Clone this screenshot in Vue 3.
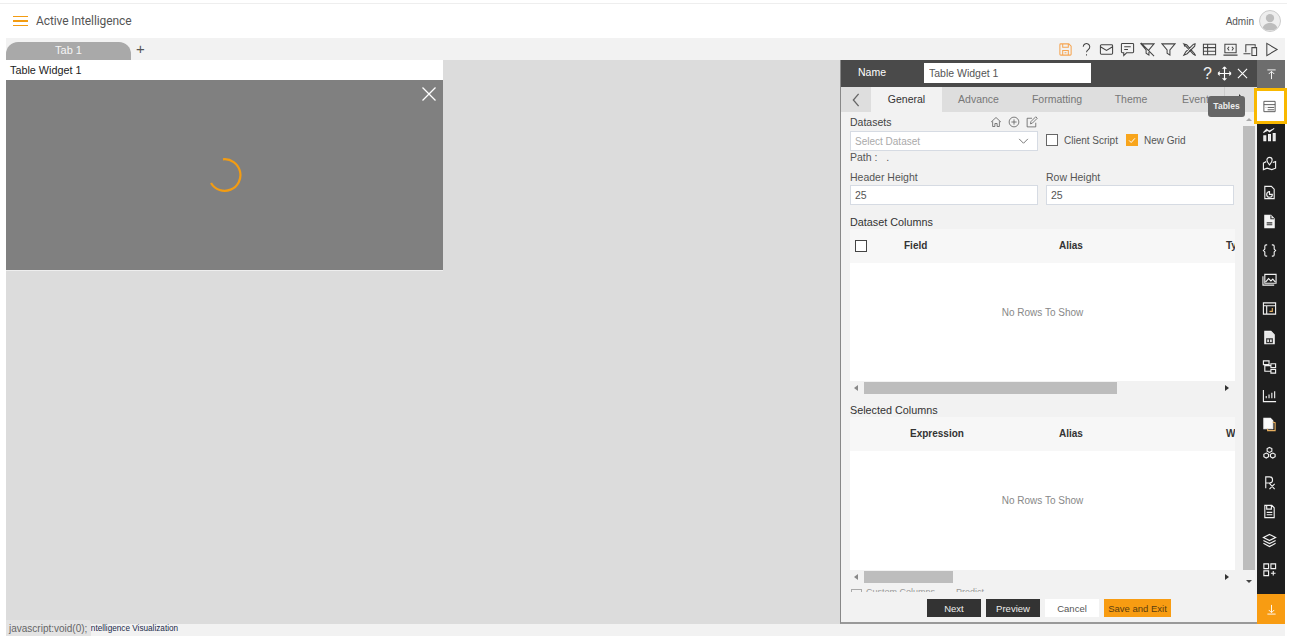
<template>
  <div class="page">
    <header class="topbar">
      <div class="brand">
        <span class="burger"><i></i><i></i><i></i></span>
        <span class="brand-name">Active Intelligence</span>
      </div>
      <div class="user">
        <span>Admin</span>
        <span class="avatar">
          <svg viewBox="0 0 24 24" width="20" height="20"><circle cx="12" cy="8.500" r="5" fill="#bdbdbd"/><path d="M3 23c0-6 4-8.500 9-8.500s9 2.500 9 8.500z" fill="#bdbdbd"/></svg>
        </span>
      </div>
    </header>

    <div class="tabstrip">
      <div class="tab">Tab 1</div>
      <span class="tab-add">+</span>
      <div class="tools">
        <svg v-for="t in toolIcons" :key="t.name" class="tool" :class="{ save: t.name === 'save' }" viewBox="0 0 16 16" width="15" height="15" fill="none" stroke="currentColor" stroke-width="1.100">
          <path :d="t.d" />
        </svg>
      </div>
    </div>

    <main class="workspace">
      <section class="canvas">
        <div class="widget">
          <div class="widget-title">Table Widget 1</div>
          <div class="widget-body">
            <svg class="widget-close" viewBox="0 0 14 14" width="14" height="14" stroke="#fff" stroke-width="1.300"><path d="M0.500 0.500L13.500 13.500M13.500 0.500L0.500 13.500" /></svg>
            <svg class="spinner" viewBox="0 0 36 36" width="36" height="36" fill="none" stroke="#f39c12" stroke-width="2.200"><path d="M16 2.300A15.800 15.800 0 1 1 4 26" /></svg>
          </div>
        </div>
      </section>

      <aside class="panel">
        <div class="panel-head">
          <span class="name-label">Name</span>
          <input class="name-input" value="Table Widget 1" />
          <div class="head-icons">
            <span class="q">?</span>
            <svg viewBox="0 0 16 16" width="15" height="15" fill="none" stroke="#fff" stroke-width="1.200"><path d="M8 1v14M1 8h14M8 1L6 3M8 1l2 2M8 15l-2-2M8 15l2-2M1 8l2-2M1 8l2 2M15 8l-2-2M15 8l-2 2"/></svg>
            <svg viewBox="0 0 12 12" width="11" height="11" fill="none" stroke="#fff" stroke-width="1.200"><path d="M1 1l10 10M11 1L1 11"/></svg>
          </div>
        </div>

        <div class="panel-tabs">
          <svg class="tabs-arrow" viewBox="0 0 10 16" width="9" height="14" fill="none" stroke="#666" stroke-width="1.500"><path d="M8 1L2 8l6 7"/></svg>
          <div class="ptab active">General</div>
          <div class="ptab t-advance">Advance</div>
          <div class="ptab t-format">Formatting</div>
          <div class="ptab t-theme">Theme</div>
          <div class="ptab last">Events</div>
          <div class="tabs-next"></div>
        </div>

        <div class="panel-scroll">
          <div class="form">
            <div class="ds-row">
              <div class="ds-col">
                <div class="ds-label">
                  <span>Datasets</span>
                  <span class="ds-icons">
                    <svg viewBox="0 0 16 16" width="12" height="12" fill="none" stroke="#555" stroke-width="1"><path d="M1.500 8L8 2l6.500 6M3.500 7v7h3v-4h3v4h3V7"/></svg>
                    <svg viewBox="0 0 16 16" width="12" height="12" fill="none" stroke="#555" stroke-width="1"><circle cx="8" cy="8" r="6.500"/><path d="M8 4.500v7M4.500 8h7"/></svg>
                    <svg viewBox="0 0 16 16" width="12" height="12" fill="none" stroke="#555" stroke-width="1"><path d="M13 9v5.500H1.500V3H8M6 10.500l.5-3L13 1l2 2-6.500 6.500z"/></svg>
                  </span>
                </div>
                <div class="select">
                  <span>Select Dataset</span>
                  <svg viewBox="0 0 12 8" width="11" height="7" fill="none" stroke="#666" stroke-width="1"><path d="M1 1l5 5 5-5"/></svg>
                </div>
              </div>
              <div class="checks">
                <span class="check"></span><span class="check-text">Client Script</span>
                <span class="check on">
                  <svg viewBox="0 0 12 12" width="10" height="10" fill="none" stroke="#fff" stroke-width="1.200"><path d="M2.500 6.500l2.500 2.500 4.500-5"/></svg>
                </span><span class="check-text">New Grid</span>
              </div>
            </div>
            <div class="path">Path :&nbsp;&nbsp; .</div>

            <div class="heights">
              <label class="field">
                <span>Header Height</span>
                <input value="25" />
              </label>
              <label class="field">
                <span>Row Height</span>
                <input value="25" />
              </label>
            </div>

            <div class="section-title first">Dataset Columns</div>
            <div class="grid grid-a">
              <div class="grid-head">
                <span class="head-check"></span>
                <b class="c-field">Field</b>
                <b class="c-alias">Alias</b>
                <b class="c-last">Ty</b>
              </div>
              <div class="grid-body">No Rows To Show</div>
              <div class="hbar">
                <span class="arr left"></span>
                <span class="track"><span class="thumb" style="width: 253px"></span></span>
                <span class="arr right"></span>
              </div>
            </div>

            <div class="section-title second">Selected Columns</div>
            <div class="grid grid-b">
              <div class="grid-head">
                <b class="c-expr">Expression</b>
                <b class="c-alias">Alias</b>
                <b class="c-last">W</b>
              </div>
              <div class="grid-body">No Rows To Show</div>
              <div class="hbar">
                <span class="arr left"></span>
                <span class="track"><span class="thumb" style="width: 89px"></span></span>
                <span class="arr right"></span>
              </div>
            </div>
            <div class="cut-row"><span class="cut-box"></span><span>Custom Columns</span><span class="cut-arrow">→</span><span>Predict</span></div>
          </div>

          <div class="vbar">
            <span class="varr up"></span>
            <span class="vtrack"></span>
            <span class="varr down"></span>
          </div>
        </div>

        <div class="panel-foot">
          <button class="btn dark">Next</button>
          <button class="btn dark">Preview</button>
          <button class="btn plain">Cancel</button>
          <button class="btn orange">Save and Exit</button>
        </div>

        <div class="tooltip">Tables</div>
      </aside>

      <nav class="rail">
        <div class="rail-top">
          <svg viewBox="0 0 12 12" width="11" height="11" fill="none" stroke="#fff" stroke-width="1"><path d="M1.500 1h9M6 11V3M3 5.500L6 2.500l3 3"/></svg>
        </div>
        <div class="rail-items">
          <div class="rail-item active">
            <svg viewBox="0 0 16 16" width="15" height="15" fill="none" stroke="#555" stroke-width="1"><path d="M2 2.500h12v11H2zM2 6h12M6 9h7M6 11.500h7M4 9h.5"/></svg>
          </div>
          <div v-for="r in railIcons" :key="r.name" class="rail-item">
            <svg viewBox="0 0 16 16" width="15" height="15" :fill="r.fill || 'none'" stroke="#f2f2f2" stroke-width="1.200">
              <path :d="r.d" />
              <path v-if="r.detail" :d="r.detail" fill="none" :stroke="r.detailColor || '#333'" />
            </svg>
          </div>
        </div>
        <div class="rail-bottom">
          <svg viewBox="0 0 12 12" width="11" height="11" fill="none" stroke="#fff" stroke-width="1"><path d="M1.500 11h9M6 1v8M3 6.500l3 3 3-3"/></svg>
        </div>
      </nav>
    </main>

    <footer class="status">Active Intelligence Visualization</footer>
    <div class="link-hint">javascript:void(0);</div>
  </div>
</template>

<script setup>
const toolIcons = [
  { name: 'save', d: 'M3 2h8.500L14 4.500V13a1 1 0 0 1-1 1H3a1 1 0 0 1-1-1V3a1 1 0 0 1 1-1zM5 2v3.500h6V2M5 14V9h6v5M7 11.500h2' },
  { name: 'help', d: 'M4.500 5a3.500 3.500 0 1 1 5.500 3c-1.300 1-2 1.500-2 3M8 13v1.500' },
  { name: 'mail', d: 'M2.500 3h11a1 1 0 0 1 1 1v8a1 1 0 0 1-1 1h-11a1 1 0 0 1-1-1V4a1 1 0 0 1 1-1zM1.500 5L8 9l6.500-4' },
  { name: 'comment', d: 'M2.500 1.500h11a1 1 0 0 1 1 1v8a1 1 0 0 1-1 1H7L4 14.500v-3H2.500a1 1 0 0 1-1-1v-8a1 1 0 0 1 1-1zM4.500 5h7M4.500 8h4' },
  { name: 'nofilter', d: 'M1 2h14L9.500 8.500V14L6.500 12V8.500zM1 1l14 14' },
  { name: 'filter', d: 'M1 2h14L9.500 8.500V14L6.500 12V8.500z' },
  { name: 'tools', d: 'M2 2l3 1 8 9 1.500 2.500L12 13 4 4.500zM14 2l-2 .5-8 8-2 3.500 3.500-1.500 8-8zM2 2l1 3' },
  { name: 'table', d: 'M1.500 2.500h13v11h-13zM1.500 6h13M1.500 9.800h13M6 2.500v11' },
  { name: 'code', d: 'M2 2.500h12v9H2zM0.500 14h15M6.500 5L5 7l1.500 2M9.500 5L11 7 9.500 9' },
  { name: 'devices', d: 'M3 11V3h10v2M0.500 12.500H8M9.500 6h5v8.500h-5z' },
  { name: 'play', d: 'M3 1.500l11 6.500-11 6.500z' }
]

const railIcons = [
  { name: 'charts', d: 'M2 14.500V9.500h2v5zM7 14.500V8h2v6.500zM12 14.500V7h2v7.500zM1.500 6l3.500-3.500L8 5l5-3.500', fill: '#ddd' },
  { name: 'map', d: 'M8 1.500a2.800 2.800 0 0 1 2.800 2.800C10.800 6.500 8 9.500 8 9.500S5.200 6.500 5.200 4.300A2.800 2.800 0 0 1 8 1.500zM4.500 6L1.500 7.500v7l4-1.500 5 1.500 4-1.500V6L11.500 7' },
  { name: 'report', d: 'M3 1.500h7L13 4.500v10H3zM8 7a3 3 0 1 0 3 3H8z' },
  { name: 'doc', d: 'M3 1.500h6.500L13 5v9.500H3z', fill: '#f5f5f5', detail: 'M5 9.500h6M5 11.500h6M9.500 1.500V5H13' },
  { name: 'braces', d: 'M5.500 2H4.500C3.500 2 3 2.500 3 3.500V6.500L1.500 8 3 9.500v3C3 13.500 3.500 14 4.500 14h1M10.500 2h1C12.500 2 13 2.500 13 3.500V6.500L14.500 8 13 9.500v3c0 1-.5 1.500-1.500 1.500h-1' },
  { name: 'image', d: 'M3 2.500h12v9.500H3zM1 4.500V14h12M4 10.500l3-3.500 2.500 2.500L11.500 7.500 14 10.500' },
  { name: 'pivot', d: 'M1.500 2h13v12h-13zM1.500 5h13M5 5v9', detail: 'M11 7.500v3.500H8', detailColor: '#e8b060' },
  { name: 'file', d: 'M3 1.500h6.500L13 5v9.500H3z', fill: '#e8e8e8', detail: 'M5 9.500h6v4H5zM8 9.500v4' },
  { name: 'tree', d: 'M1.500 2h6v4h-6zM9.500 5h5v4h-5zM9.500 11h5v4h-5zM3 6v7h6.500M3 7h6.500' },
  { name: 'linechart', d: 'M1.500 2v12.500H15M4.500 11V8.500M7.500 11V7M10.500 11V5M13.500 11V3.500' },
  { name: 'copy', d: 'M2 1.500h7L11.500 4v8.500H2z', fill: '#fafafa', detail: 'M11.500 5.500l2.500.5v8.500H6v-2', detailColor: '#e8b060' },
  { name: 'cubes', d: 'M8 1.500l2.500 1.300v2.700L8 6.800 5.500 5.500V2.800zM4.500 7.500L7 8.800v2.700L4.500 12.800 2 11.500V8.800zM11.500 7.500L14 8.800v2.700l-2.500 1.300L9 11.500V8.800z' },
  { name: 'rx', d: 'M4 14V2h4a3 3 0 0 1 0 6.500H4M7.500 8.500L13.500 15M13.500 9.500L8 15' },
  { name: 'save', d: 'M3 1.500h7.500L13 4v10.500H3zM5 1.500v4h5v-4M5 9h6M5 11.500h6' },
  { name: 'layers', d: 'M8 1.500l6.500 3.200L8 8 1.500 4.700zM1.500 8L8 11.300 14.500 8M1.500 11L8 14.500 14.500 11' },
  { name: 'widgets', d: 'M2 2h5v5H2zM9.500 2h5v5h-5zM2 9.500h5v5H2zM12 9.500v5M9.500 12h5' }
]
</script>

<style>
html, body {
  margin: 0;
  background: #fff;
}
</style>

<style scoped>
.page {
  position: relative;
  width: 1295px;
  height: 636px;
  overflow: hidden;
  background: #fff;
  font-family: "Liberation Sans", Arial, sans-serif;
  font-size: 10.500px;
  color: #333;
  padding: 3px 10px 0 6px;
  box-sizing: border-box;
  display: flex;
  flex-direction: column;
}

.topbar {
  height: 35px;
  flex: none;
  margin-left: -6px;
  margin-right: -2px;
  border-top: 1px solid #eee;
  box-sizing: border-box;
  display: flex;
  justify-content: space-between;
  align-items: center;
  padding: 0 6px 0 13px;
}

.brand {
  display: flex;
  align-items: center;
  gap: 8px;
}

.burger {
  display: flex;
  flex-direction: column;
  gap: 3px;
  width: 15px;
}

.burger i {
  height: 1.500px;
  background: #f39c12;
}

.brand-name {
  font-family: Roboto, "Liberation Sans", sans-serif;
  font-size: 12px;
  color: #555;
  letter-spacing: -0.100px;
}

.user {
  display: flex;
  align-items: center;
  gap: 5px;
  font-size: 10px;
  color: #555;
}

.avatar {
  width: 20px;
  height: 20px;
  border-radius: 50%;
  border: 1px solid #ccc;
  overflow: hidden;
  background: #eee;
  display: block;
}

.tabstrip {
  height: 22px;
  flex: none;
  background: #f2f2f2;
  display: flex;
  align-items: flex-end;
  position: relative;
}

.tab {
  width: 125px;
  height: 18px;
  background: #a9a9a9;
  color: #f5f5f5;
  border-radius: 12px 12px 0 0;
  text-align: center;
  line-height: 17px;
  font-size: 11px;
}

.tab-add {
  margin-left: 5px;
  height: 21px;
  font-size: 15px;
  line-height: 20px;
  color: #555;
}

.tools {
  margin-left: auto;
  height: 22px;
  display: flex;
  align-items: center;
  gap: 5.600px;
  padding-right: 6px;
  color: #444;
}

.tool.save {
  color: #f6a552;
}

.workspace {
  flex: 1;
  display: flex;
  min-height: 0;
}

.canvas {
  flex: 1;
  background: #dcdcdc;
}

.widget {
  width: 437px;
}

.widget-title {
  height: 20px;
  background: #fff;
  line-height: 20px;
  padding-left: 4px;
  font-size: 10.800px;
  color: #222;
}

.widget-body {
  position: relative;
  height: 190px;
  background: #808080;
  border-bottom: 1px solid #eee;
}

.widget-close {
  position: absolute;
  top: 7px;
  right: 7px;
}

.spinner {
  position: absolute;
  left: 201px;
  top: 77px;
}

.panel {
  position: relative;
  width: 417px;
  flex: none;
  background: #f2f2f2;
  border-left: 1px solid #888;
  border-bottom: 2px solid #999;
  box-sizing: border-box;
  display: flex;
  flex-direction: column;
}

.panel-head {
  height: 27px;
  flex: none;
  background: #4a4a4a;
  display: flex;
  align-items: center;
  color: #fff;
}

.name-label {
  width: 83px;
  padding-left: 17px;
  box-sizing: border-box;
  font-size: 10.500px;
  margin-top: -3px;
}

.name-input {
  width: 167px;
  height: 20px;
  border: 0;
  padding: 0 5px;
  box-sizing: border-box;
  font: 10.500px "Liberation Sans", Arial, sans-serif;
  color: #555;
  background: #fff;
  margin-top: -2px;
}

.head-icons {
  margin-left: auto;
  display: flex;
  align-items: center;
  gap: 5px;
  padding-right: 9px;
}

.q {
  font-size: 16px;
  line-height: 16px;
  color: #eee;
}

.panel-tabs {
  height: 25px;
  flex: none;
  background: #dedede;
  display: flex;
  align-items: center;
  position: relative;
}

.tabs-arrow {
  width: 30px;
  flex: none;
}

.ptab {
  height: 25px;
  line-height: 25px;
  text-align: center;
  color: #777;
  font-size: 10.500px;
  flex: none;
}

.ptab.active {
  width: 71px;
  background: #f2f2f2;
  color: #333;
}

.t-advance {
  width: 73px;
}

.t-format {
  width: 84px;
}

.t-theme {
  width: 64px;
}

.ptab.last {
  width: 62px;
  padding-left: 19px;
  box-sizing: border-box;
  text-align: left;
  white-space: nowrap;
  overflow: hidden;
  border-right: 1px solid #ccc;
}

.tabs-next {
  position: absolute;
  right: 13px;
  top: 7px;
  width: 0;
  height: 0;
  border-left: 5px solid #333;
  border-top: 5px solid transparent;
  border-bottom: 5px solid transparent;
}

.panel-scroll {
  flex: 1;
  min-height: 0;
  display: flex;
  overflow: hidden;
}

.form {
  width: 385px;
  margin-left: 9px;
  flex: none;
  overflow: hidden;
  position: relative;
}

.ds-row {
  display: flex;
  margin-top: 3px;
}

.ds-col {
  width: 188px;
}

.ds-label {
  height: 14px;
  display: flex;
  justify-content: space-between;
  align-items: center;
  color: #444;
}

.ds-icons {
  display: flex;
  gap: 6px;
}

.select {
  height: 20px;
  margin-top: 2px;
  border: 1px solid #d6dbe3;
  background: #fff;
  box-sizing: border-box;
  display: flex;
  justify-content: space-between;
  align-items: center;
  padding: 0 8px 0 4px;
  color: #aaa;
  font-size: 10px;
}

.checks {
  margin: 15px 0 0 8px;
  height: 20px;
  display: flex;
  align-items: center;
  color: #555;
  font-size: 10px;
}

.check {
  width: 10px;
  height: 10px;
  border: 1px solid #666;
  background: #fff;
  display: block;
  flex: none;
}

.check.on {
  background: #f8a51c;
  border-color: #f8a51c;
  display: flex;
  align-items: center;
  justify-content: center;
}

.check-text {
  margin: 0 8px 0 6px;
}

.path {
  height: 13px;
  line-height: 13px;
  color: #555;
}

.heights {
  display: flex;
  gap: 8px;
  margin-top: 6px;
}

.field {
  width: 188px;
  display: block;
  color: #555;
}

.field span {
  display: block;
  height: 14px;
  line-height: 14px;
}

.field input {
  display: block;
  width: 100%;
  height: 20px;
  margin-top: 1px;
  box-sizing: border-box;
  border: 1px solid #d6dbe3;
  padding: 0 4px;
  font: 10.500px "Liberation Sans", Arial, sans-serif;
  color: #555;
  background: #fff;
}

.section-title {
  color: #333;
  font-size: 10.800px;
  height: 14px;
  line-height: 14px;
}

.section-title.first {
  margin-top: 10px;
}

.section-title.second {
  margin-top: 9px;
}

.grid-head {
  height: 34px;
  background: #f7f7f7;
  position: relative;
  overflow: hidden;
}

.grid-head b {
  position: absolute;
  top: 11px;
  font-size: 10px;
  color: #333;
}

.head-check {
  position: absolute;
  left: 5px;
  top: 11px;
  width: 10px;
  height: 10px;
  border: 1px solid #444;
  background: #fff;
}

.c-field {
  left: 54px;
}

.c-expr {
  left: 60px;
}

.c-alias {
  left: 209px;
}

.c-last {
  left: 376px;
}

.grid-body {
  background: #fff;
  box-sizing: border-box;
  padding-top: 44px;
  text-align: center;
  line-height: 12px;
  color: #888;
  font-size: 10px;
}

.grid-a .grid-body {
  height: 118px;
}

.grid-b .grid-body {
  height: 119px;
}

.hbar {
  height: 13px;
  background: #f2f2f2;
  display: flex;
  align-items: center;
}

.grid-b .hbar {
  height: 14px;
}

.arr {
  width: 0;
  height: 0;
  border-top: 3px solid transparent;
  border-bottom: 3px solid transparent;
  flex: none;
}

.arr.left {
  border-right: 4px solid #888;
  margin: 0 6px 0 4px;
}

.arr.right {
  border-left: 4px solid #333;
  margin: 0 6px 0 5px;
}

.track {
  flex: 1;
  display: block;
}

.thumb {
  display: block;
  height: 12px;
  background: #bdbdbd;
}

.cut-row {
  height: 6px;
  overflow: hidden;
  margin-top: 3px;
  font-size: 9px;
  color: #999;
  line-height: 11px;
  white-space: nowrap;
  display: flex;
  align-items: flex-start;
}

.cut-box {
  display: block;
  width: 9px;
  height: 9px;
  margin: 2px 4px 0 1px;
  border: 1px solid #aaa;
  flex: none;
}

.cut-arrow {
  margin: 0 3px 0 9px;
}

.vbar {
  width: 12px;
  margin-left: 8px;
  display: flex;
  flex-direction: column;
  align-items: center;
}

.vtrack {
  flex: 1;
  width: 12px;
  background: #bdbdbd;
}

.varr {
  width: 0;
  height: 0;
  margin: 6px 0 5px;
  border-left: 3px solid transparent;
  border-right: 3px solid transparent;
}

.varr.up {
  border-bottom: 3px solid #aaa;
}

.varr.down {
  border-top: 3px solid #444;
  margin: 10px 0 9px;
}

.panel-foot {
  height: 30px;
  flex: none;
  display: flex;
  justify-content: center;
  align-items: center;
  gap: 5px;
  padding: 2px 0 0 0;
  box-sizing: border-box;
}

.btn {
  width: 54px;
  height: 18px;
  border: 0;
  padding: 0;
  font: 9.500px "Liberation Sans", Arial, sans-serif;
}

.btn.dark {
  background: #333;
  color: #eee;
}

.btn.plain {
  background: #fff;
  color: #555;
}

.btn.orange {
  width: 67px;
  background: #f89c12;
  color: #5a3c10;
}

.tooltip {
  position: absolute;
  right: 12px;
  top: 36px;
  width: 37px;
  height: 21px;
  border-radius: 3px;
  background: #666;
  color: #eee;
  font-size: 8.500px;
  font-weight: bold;
  line-height: 21px;
  text-align: center;
}

.rail {
  width: 28px;
  flex: none;
  background: #1e1e1e;
  display: flex;
  flex-direction: column;
  position: relative;
}

.rail-top {
  height: 28px;
  flex: none;
  background: #6d6d6d;
  display: flex;
  align-items: center;
  justify-content: center;
}

.rail-items {
  flex: 1;
  display: flex;
  flex-direction: column;
}

.rail-item {
  height: 29px;
  flex: none;
  display: flex;
  align-items: center;
  justify-content: center;
  padding-right: 4px;
}

.rail-item.active {
  position: relative;
  z-index: 1;
  height: 36px;
  background: #fff;
  margin: 0 -2px -4px -3px;
  border: 3px solid #f9b800;
  width: 33px;
  box-sizing: border-box;
  padding-right: 3px;
}

.rail-bottom {
  height: 30px;
  flex: none;
  background: #f89c12;
  display: flex;
  align-items: center;
  justify-content: center;
}

.status {
  height: 12px;
  flex: none;
  background: #f2f2f2;
  font-size: 8.200px;
  line-height: 10px;
  padding-left: 58px;
  color: #1a2a4a;
}

.link-hint {
  position: absolute;
  left: 6px;
  bottom: 0;
  height: 16px;
  width: 85px;
  background: #e3e3e3;
  border-radius: 0 3px 0 0;
  padding-left: 3px;
  box-sizing: border-box;
  font-size: 10px;
  line-height: 17px;
  color: #666;
}
</style>
